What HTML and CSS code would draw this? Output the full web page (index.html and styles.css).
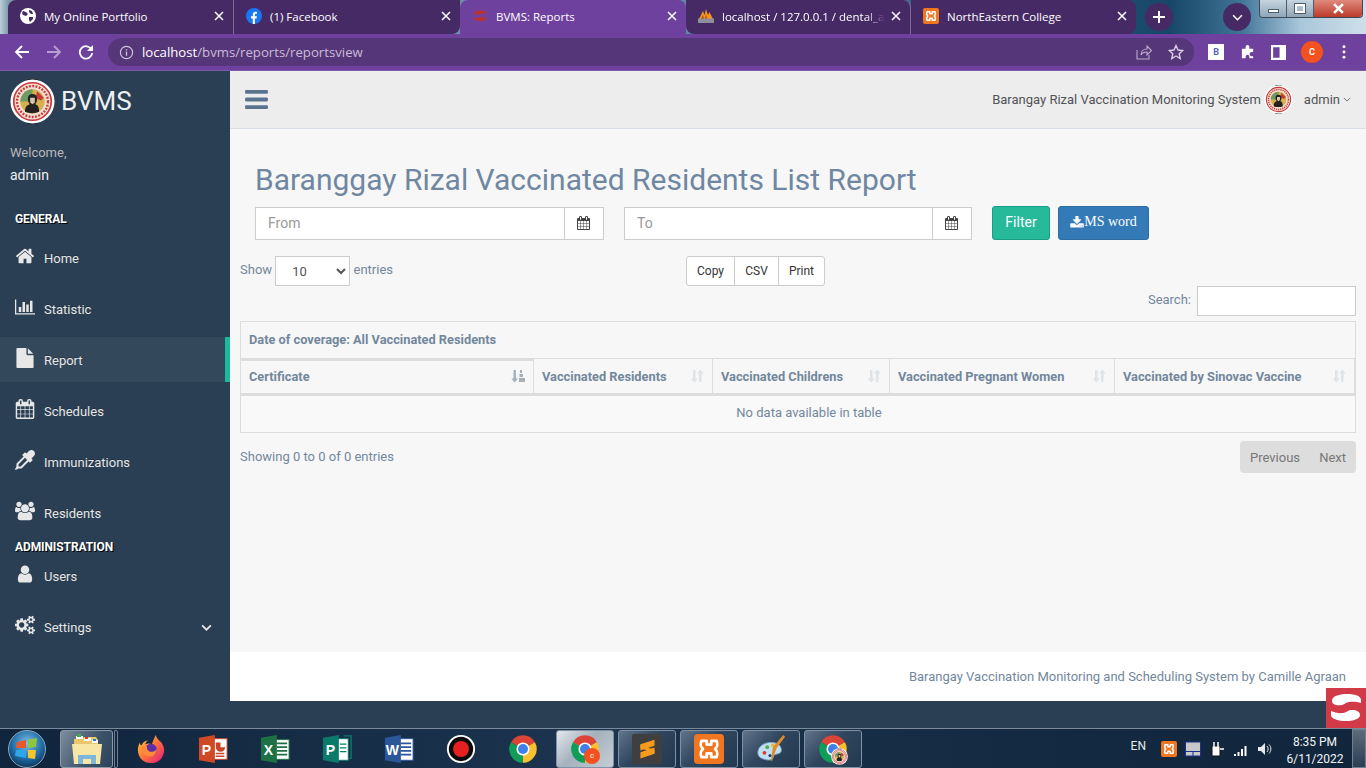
FILE: index.html
```html
<!DOCTYPE html>
<html lang="en">

<head>
    <meta charset="UTF-8">
    <meta name="viewport" content="width=device-width, initial-scale=1.0">
    <title>BVMS: Reports</title>
    <link rel="stylesheet" href="styles.css">
</head>

<body>

    <!-- shared icons -->
    <svg class="sprite" aria-hidden="true">
        <symbol id="i-bars" viewBox="128 256 1536 1280"><path d="M1664 1344v128q0 26-19 45t-45 19h-1408q-26 0-45-19t-19-45v-128q0-26 19-45t45-19h1408q26 0 45 19t19 45zm0-512v128q0 26-19 45t-45 19h-1408q-26 0-45-19t-19-45v-128q0-26 19-45t45-19h1408q26 0 45 19t19 45zm0-512v128q0 26-19 45t-45 19h-1408q-26 0-45-19t-19-45v-128q0-26 19-45t45-19h1408q26 0 45 19t19 45z"/></symbol>
        <symbol id="i-home" viewBox="0 0 1792 1792"><path d="M1472 992v480q0 26-19 45t-45 19h-384v-384h-256v384h-384q-26 0-45-19t-19-45v-480q0-1 .5-3t.5-3l575-474 575 474q1 2 1 6zm223-69l-62 74q-8 9-21 11h-3q-13 0-21-7l-692-577-692 577q-12 8-24 7-13-2-21-11l-62-74q-8-10-7-23.5t11-21.5l719-599q32-26 76-26t76 26l244 204v-195q0-14 9-23t23-9h192q14 0 23 9t9 23v408l219 182q10 8 11 21.5t-7 23.5z"/></symbol>
        <symbol id="i-chart" viewBox="0 0 2048 1792"><path d="M640 896v512h-256v-512h256zm384-512v1024h-256v-1024h256zm1024 1152v128h-2048v-1536h128v1408h1920zm-640-896v768h-256v-768h256zm384-384v1152h-256v-1152h256z"/></symbol>
        <symbol id="i-file" viewBox="128 0 1536 1792"><path d="M1152 512v-472q22 14 36 28l408 408q14 14 28 36h-472zm-128 32q0 40 28 68t68 28h544v1056q0 40-28 68t-68 28h-1344q-40 0-68-28t-28-68v-1600q0-40 28-68t68-28h800v544z"/></symbol>
        <symbol id="i-calendar" viewBox="0 0 1664 1792"><path d="M128 1664h288v-288h-288v288zm352 0h320v-288h-320v288zm-352-352h288v-320h-288v320zm352 0h320v-320h-320v320zm-352-384h288v-288h-288v288zm736 736h320v-288h-320v288zm-384-736h320v-288h-320v288zm768 736h288v-288h-288v288zm-384-352h320v-320h-320v320zm-352-864v-288q0-13-9.5-22.5t-22.5-9.5h-64q-13 0-22.5 9.5t-9.5 22.5v288q0 13 9.5 22.5t22.5 9.5h64q13 0 22.5-9.5t9.5-22.5zm736 864h288v-320h-288v320zm-384-384h320v-288h-320v288zm384 0h288v-288h-288v288zm32-480v-288q0-13-9.5-22.5t-22.5-9.5h-64q-13 0-22.5 9.5t-9.5 22.5v288q0 13 9.5 22.5t22.5 9.5h64q13 0 22.5-9.5t9.5-22.5zm384-64v1280q0 52-38 90t-90 38h-1408q-52 0-90-38t-38-90v-1280q0-52 38-90t90-38h128v-96q0-66 47-113t113-47h64q66 0 113 47t47 113v96h384v-96q0-66 47-113t113-47h64q66 0 113 47t47 113v96h128q52 0 90 38t38 90z"/></symbol>
        <symbol id="i-dropper" viewBox="0 0 1792 1792"><path d="M1698 94q94 94 94 226.5t-94 225.5l-225 223 104 104q10 10 10 23t-10 23l-210 210q-10 10-23 10t-23-10l-105-105-603 603q-37 37-90 37h-203l-256 128-64-64 128-256v-203q0-53 37-90l603-603-105-105q-10-10-10-23t10-23l210-210q10-10 23-10t23 10l104 104 223-225q93-94 225.5-94t226.5 94zm-1186 1378l576-576-192-192-576 576v192h192z"/></symbol>
        <symbol id="i-users" viewBox="0 0 1920 1792"><path d="M593 896q-162 5-265 128h-134q-82 0-138-40.5t-56-118.5q0-353 124-353 6 0 43.5 21t97.5 42.5 119 21.5q67 0 133-23-5 37-5 66 0 139 81 256zm1071 637q0 120-73 189.5t-194 69.5h-874q-121 0-194-69.5t-73-189.5q0-53 3.5-103.5t14-109 26.5-108.5 43-97.5 62-81 85.5-53.5 111.5-20q10 0 43 21.5t73 48 107 48 135 21.5 135-21.5 107-48 73-48 43-21.5q61 0 111.5 20t85.5 53.5 62 81 43 97.5 26.5 108.5 14 109 3.5 103.5zm-1024-1277q0 106-75 181t-181 75-181-75-75-181 75-181 181-75 181 75 75 181zm704 384q0 159-112.5 271.5t-271.5 112.5-271.5-112.5-112.5-271.5 112.5-271.5 271.5-112.5 271.5 112.5 112.5 271.5zm576 225q0 78-56 118.5t-138 40.5h-134q-103-123-265-128 81-117 81-256 0-29-5-66 66 23 133 23 59 0 119-21.5t97.5-42.5 43.5-21q124 0 124 353zm-128-609q0 106-75 181t-181 75-181-75-75-181 75-181 181-75 181 75 75 181z"/></symbol>
        <symbol id="i-user" viewBox="0 128 1792 1536"><path d="M1536 1399q0 109-62.5 187t-150.5 78h-854q-88 0-150.5-78t-62.5-187q0-85 8.5-160.5t31.5-152 58.5-131 94-89 134.5-34.5q131 128 313 128t313-128q76 0 134.5 34.5t94 89 58.5 131 31.5 152 8.5 160.5zm-256-887q0 159-112.5 271.5t-271.5 112.5-271.5-112.5-112.5-271.5 112.5-271.5 271.5-112.5 271.5 112.5 112.5 271.5z"/></symbol>
        <symbol id="i-cogs" viewBox="0 0 1920 1792"><path d="M896 896q0-106-75-181t-181-75-181 75-75 181 75 181 181 75 181-75 75-181zm768 512q0-52-38-90t-90-38-90 38-38 90q0 53 37.5 90.5t90.5 37.5 90.5-37.5 37.5-90.5zm0-1024q0-52-38-90t-90-38-90 38-38 90q0 53 37.5 90.5t90.5 37.5 90.5-37.5 37.5-90.5zm-384 421v185q0 10-7 19.5t-16 10.5l-155 24q-11 35-32 76 34 48 90 115 7 11 7 20 0 12-7 19-23 30-82.5 89.5t-78.5 59.5q-11 0-21-7l-115-90q-37 19-77 31-11 108-23 155-7 24-30 24h-186q-11 0-20-7.5t-10-17.5l-23-153q-34-10-75-31l-118 89q-7 7-20 7-11 0-21-8-144-133-144-160 0-9 7-19 10-14 41-53t47-61q-23-44-35-82l-152-24q-10-1-17-9.5t-7-19.5v-185q0-10 7-19.5t16-10.5l155-24q11-35 32-76-34-48-90-115-7-11-7-20 0-12 7-20 22-30 82-89t79-59q11 0 21 7l115 90q34-18 77-32 11-108 23-154 7-24 30-24h186q11 0 20 7.5t10 17.5l23 153q34 10 75 31l118-89q8-7 20-7 11 0 21 8 144 133 144 160 0 8-7 19-12 16-42 54t-45 60q23 48 34 82l152 23q10 2 17 10.5t7 19.5zm640 533v140q0 16-149 31-12 27-30 52 51 113 51 138 0 4-4 7-122 71-124 71-8 0-46-47t-52-68q-20 2-30 2t-30-2q-14 21-52 68t-46 47q-2 0-124-71-4-3-4-7 0-25 51-138-18-25-30-52-149-15-149-31v-140q0-16 149-31 13-29 30-52-51-113-51-138 0-4 4-7 4-2 35-20t59-34 30-16q8 0 46 46.5t52 67.5q20-2 30-2t30 2q51-71 92-112l6-2q4 0 124 70 4 3 4 7 0 25-51 138 17 23 30 52 149 15 149 31zm0-1024v140q0 16-149 31-12 27-30 52 51 113 51 138 0 4-4 7-122 71-124 71-8 0-46-47t-52-68q-20 2-30 2t-30-2q-14 21-52 68t-46 47q-2 0-124-71-4-3-4-7 0-25 51-138-18-25-30-52-149-15-149-31v-140q0-16 149-31 13-29 30-52-51-113-51-138 0-4 4-7 4-2 35-20t59-34 30-16q8 0 46 46.5t52 67.5q20-2 30-2t30 2q51-71 92-112l6-2q4 0 124 70 4 3 4 7 0 25-51 138 17 23 30 52 149 15 149 31z"/></symbol>
        <symbol id="i-download" viewBox="64 128 1664 1472"><path d="M1344 1344q0-26-19-45t-45-19-45 19-19 45 19 45 45 19 45-19 19-45zm256 0q0-26-19-45t-45-19-45 19-19 45 19 45 45 19 45-19 19-45zm128-224v320q0 40-28 68t-68 28h-1472q-40 0-68-28t-28-68v-320q0-40 28-68t68-28h465l135 136q58 56 136 56t136-56l136-136h464q40 0 68 28t28 68zm-325-569q17 41-14 70l-448 448q-18 19-45 19t-45-19l-448-448q-31-29-14-70 17-39 59-39h256v-448q0-26 19-45t45-19h256q26 0 45 19t19 45v448h256q42 0 59 39z"/></symbol>
        <symbol id="i-sort" viewBox="0 0 14 14"><path d="M3 1h2.600v8.500H8L4.300 13.600.6 9.500H3z"/><path d="M9 13h2.600V4.500H14L10.300 .4 6.600 4.500H9z"/></symbol>
        <symbol id="i-sort-asc" viewBox="0 0 14 14"><path d="M2.500 1h2.400v8.500h2.100L3.700 13.600.4 9.500h2.100z"/><path d="M9 1h2v3H9zM8.500 5h3.500v3H8.500zM8 9h6v4H8z"/></symbol>
        <symbol id="i-close" viewBox="0 0 10 10"><path d="M1 1l8 8M9 1L1 9" fill="none" stroke="currentColor" stroke-width="1.500"/></symbol>
        <symbol id="i-xampp" viewBox="0 0 24 24">
            <rect width="24" height="24" rx="3" fill="#f0761f"/>
            <path d="M6 5.500h4.200v3h3.600v-3H18c1.200 3 1 4.500-1.200 6.500 2.200 2 2.400 3.500 1.200 6.500h-4.200v-3h-3.600v3H6c-1.200-3-1-4.500 1.200-6.500C5 10 4.800 8.500 6 5.500z" fill="none" stroke="#fff" stroke-width="2.200" stroke-linejoin="round"/>
        </symbol>
        <symbol id="i-chrome" viewBox="0 0 48 48">
            <path d="M24 24L4.900 13A22 22 0 0 1 43.050 13z" fill="#db4437"/>
            <path d="M24 24L4.900 13A22 22 0 0 0 24 46z" fill="#0f9d58"/>
            <path d="M24 24L24 46A22 22 0 0 0 43.050 13z" fill="#fbc02d"/>
            <circle cx="24" cy="24" r="10.500" fill="#fff"/>
            <circle cx="24" cy="24" r="8" fill="#3f7fe8"/>
        </symbol>
        <symbol id="i-seal" viewBox="0 0 48 48">
            <rect x="18" y="0" width="12" height="48" rx="3" fill="#111"/>
            <circle cx="24" cy="24" r="23.500" fill="#fff"/>
            <circle cx="24" cy="24" r="20" fill="#f3dfd2" stroke="#c9383a" stroke-width="1.800"/>
            <circle cx="24" cy="24" r="16.500" fill="none" stroke="#c9383a" stroke-width="2.500" stroke-dasharray="2 1.500"/>
            <circle cx="24" cy="24" r="13" fill="#d5b04b"/>
            <path d="M11 24a13 13 0 0 1 13-13V24z" fill="#6f9a63"/>
            <path d="M29 13l7 7-3 3-6-3z" fill="#c9383a"/>
            <path d="M16 35c0-5 2-7 5-8-1-2-2-3-2-6 0-3 2-5 5-5s5 2 5 5c0 3-1 4-2 6 3 1 4 3 4 8-4 2-11 2-15 0z" fill="#222"/>
            <path d="M21.500 20h5v5l-2.500 2-2.500-2z" fill="#d9c4ae"/>
        </symbol>
        <symbol id="i-bvms" viewBox="0 0 40 40">
            <path d="M6 13c0-5 7-7 15-7s14 2 14 6v3c-3-1-8-1.500-12-1-3 .5-4 2-7 3-4 1-10 0-10-4z"/>
            <path d="M34 27c0 4-7 6-14 6S5 31 5 27v-4c3 1.500 8 2.500 12 2 3-.5 5-2.500 8-3 4-.5 9 1 9 5z"/>
        </symbol>
    </svg>

    <div class="tabstrip">
        <div class="tab tab-dark tab-first">
            <svg class="tab-icon" viewBox="0 0 16 16"><circle cx="8" cy="8" r="8" fill="#fff"/><path d="M3 3l3 1 2 2-2 2-3-1-1-2zM9 9l4 0 0 2-3 3-1-2z" fill="#462a66"/><path d="M9 2l3 1 1 3-2 0-2-2z" fill="#462a66"/></svg>
            <span class="tab-title">My Online Portfolio</span>
            <svg class="tab-close"><use href="#i-close"/></svg>
        </div>
        <div class="tab tab-dark tab-before-active">
            <svg class="tab-icon" viewBox="0 0 16 16"><circle cx="8" cy="8" r="8" fill="#1a77f2"/><path d="M6.800 16v-5.500H5V8.200h1.800V6.600c0-1.800 1.100-2.800 2.700-2.800l1.500.1v1.900h-1c-.9 0-1.100.5-1.100 1.100v1.300h2l-.3 2.300H8.900V16z" fill="#fff"/></svg>
            <span class="tab-title">(1) Facebook</span>
            <svg class="tab-close"><use href="#i-close"/></svg>
        </div>
        <div class="tab tab-active">
            <svg class="tab-icon tab-icon-red"><use href="#i-bvms"/></svg>
            <span class="tab-title">BVMS: Reports</span>
            <svg class="tab-close"><use href="#i-close"/></svg>
        </div>
        <div class="tab tab-dark tab-after-active">
            <svg class="tab-icon" viewBox="0 0 16 16"><path d="M1 11L5 3l1.500 4L8 1l2 6 1.500-3L15 11z" fill="#f0961f"/><path d="M7 11l1-5 1 5zM3 11l2-4 1 4z" fill="#b5491c"/><rect x="0" y="10.500" width="16" height="4.500" fill="#8d8f9b"/></svg>
            <span class="tab-title tab-title-fade">localhost / 127.0.0.1 / dental_a</span>
            <svg class="tab-close"><use href="#i-close"/></svg>
        </div>
        <div class="tab tab-dark tab-last">
            <svg class="tab-icon"><use href="#i-xampp"/></svg>
            <span class="tab-title">NorthEastern College</span>
            <svg class="tab-close"><use href="#i-close"/></svg>
        </div>
        <div class="round-btn round-plus"><svg viewBox="0 0 12 12"><path d="M6 0v12M0 6h12" fill="none" stroke="#fff" stroke-width="2"/></svg></div>
        <div class="round-btn round-down"><svg viewBox="0 0 12 8"><path d="M1 1.500l5 5 5-5" fill="none" stroke="#fff" stroke-width="1.800"/></svg></div>
        <div class="win-controls">
            <span class="win-btn"><i class="win-min"></i></span>
            <span class="win-btn"><i class="win-max"></i></span>
            <span class="win-btn win-close"><svg viewBox="0 0 10 10"><path d="M1 1l8 8M9 1L1 9" fill="none" stroke="#fff" stroke-width="2.400"/></svg></span>
        </div>
    </div>

    <div class="toolbar">
        <svg class="nav-btn" viewBox="0 0 16 16"><path d="M15 8H2M8 2L2 8l6 6" fill="none" stroke="#fff" stroke-width="1.800"/></svg>
        <svg class="nav-btn nav-dim" viewBox="0 0 16 16"><path d="M1 8h13M8 2l6 6-6 6" fill="none" stroke="#b79fd3" stroke-width="1.800"/></svg>
        <svg class="nav-btn" viewBox="0 0 16 16"><path d="M13.500 5.500A6.200 6.200 0 1 0 14.200 9" fill="none" stroke="#fff" stroke-width="1.800"/><path d="M15 1v6H9z" fill="#fff"/></svg>
        <div class="address">
            <svg class="addr-info" viewBox="0 0 16 16"><circle cx="8" cy="8" r="6.500" fill="none" stroke="#cfc4de" stroke-width="1.300"/><path d="M8 7v4.500M8 4.500v1.300" stroke="#cfc4de" stroke-width="1.400"/></svg>
            <span class="addr-url"><b>localhost</b>/bvms/reports/reportsview</span>
            <svg class="addr-icon" viewBox="0 0 16 16"><path d="M1 6v9h12v-4M5 11c0-4 3-6 6-6V2l4.500 4.500L11 11V8c-3 0-5 1-6 3z" fill="none" stroke="#bcadcf" stroke-width="1.100"/></svg>
            <svg class="addr-icon" viewBox="0 0 16 16"><path d="M8 1.500l2 4.500 4.800.5-3.600 3.200 1 4.800L8 12l-4.200 2.500 1-4.800L1.200 6.500 6 6z" fill="none" stroke="#d8cfe3" stroke-width="1.400"/></svg>
        </div>
        <div class="ext-icons">
            <span class="ext-b">B</span>
            <svg class="ext-icon" viewBox="0 0 16 16"><path d="M1 5h4V3a2 2 0 0 1 4 0v2h4v3.500h-1.500a2.200 2.200 0 0 0 0 4.500H13v2H9v-1.500a2 2 0 0 0-4 0V15H1z" fill="#fff" transform="translate(1 -1)"/></svg>
            <svg class="ext-icon" viewBox="0 0 14 14"><path d="M1 1h12v12H1z" fill="none" stroke="#fff" stroke-width="2"/><path d="M8 1h5v12H8z" fill="#fff"/></svg>
            <span class="avatar">C</span>
            <svg class="ext-dots" viewBox="0 0 4 16"><circle cx="2" cy="2" r="1.700"/><circle cx="2" cy="8" r="1.700"/><circle cx="2" cy="14" r="1.700"/></svg>
        </div>
    </div>

    <div class="app">
        <aside class="sidebar">
            <div class="brand">
                <svg class="brand-logo"><use href="#i-seal"/></svg>
                <span>BVMS</span>
            </div>
            <div class="profile">
                <span>Welcome,</span>
                <h2>admin</h2>
            </div>
            <h3 class="menu-title">General</h3>
            <ul class="menu">
                <li><svg class="menu-icon"><use href="#i-home"/></svg>Home</li>
                <li><svg class="menu-icon"><use href="#i-chart"/></svg>Statistic</li>
                <li class="active"><svg class="menu-icon"><use href="#i-file"/></svg>Report</li>
                <li><svg class="menu-icon"><use href="#i-calendar"/></svg>Schedules</li>
                <li><svg class="menu-icon"><use href="#i-dropper"/></svg>Immunizations</li>
                <li><svg class="menu-icon"><use href="#i-users"/></svg>Residents</li>
            </ul>
            <h3 class="menu-title menu-title-admin">Administration</h3>
            <ul class="menu">
                <li><svg class="menu-icon"><use href="#i-user"/></svg>Users</li>
                <li><svg class="menu-icon"><use href="#i-cogs"/></svg>Settings
                    <svg class="menu-chevron" viewBox="0 0 12 8"><path d="M1 1.500l5 5 5-5" fill="none" stroke="#e7e7e7" stroke-width="2"/></svg>
                </li>
            </ul>
        </aside>

        <div class="main">
            <nav class="topnav">
                <svg class="hamburger"><use href="#i-bars"/></svg>
                <div class="topnav-right">
                    <span>Barangay Rizal Vaccination Monitoring System</span>
                    <svg class="top-logo"><use href="#i-seal"/></svg>
                    <span class="top-user">admin</span>
                    <svg class="top-chevron" viewBox="0 0 10 6"><path d="M1 1l4 4 4-4" fill="none" stroke="#515356" stroke-width="1"/></svg>
                </div>
            </nav>

            <main class="content">
                <h1 class="page-title">Baranggay Rizal Vaccinated Residents List Report</h1>

                <div class="filter-row">
                    <div class="date-group">
                        <input type="text" placeholder="From">
                        <span class="date-addon"><svg><use href="#i-calendar"/></svg></span>
                    </div>
                    <div class="date-group date-group-to">
                        <input type="text" placeholder="To">
                        <span class="date-addon"><svg><use href="#i-calendar"/></svg></span>
                    </div>
                    <button class="btn btn-filter">Filter</button>
                    <button class="btn btn-word"><svg><use href="#i-download"/></svg>MS word</button>
                </div>

                <div class="dt-top">
                    <label class="dt-length">Show
                        <select><option>10</option></select>
                        entries</label>
                    <div class="dt-buttons">
                        <span>Copy</span><span>CSV</span><span>Print</span>
                    </div>
                </div>
                <div class="dt-search">
                    <label for="search">Search:</label>
                    <input type="text" id="search">
                </div>

                <table class="dt-table">
                    <colgroup>
                        <col class="col-1"><col class="col-2"><col class="col-3"><col class="col-4"><col class="col-5">
                    </colgroup>
                    <thead>
                        <tr>
                            <td colspan="5" class="dt-caption">Date of coverage: All Vaccinated Residents</td>
                        </tr>
                        <tr class="dt-head">
                            <th class="sorted">Certificate<svg class="sort-icon"><use href="#i-sort-asc"/></svg></th>
                            <th>Vaccinated Residents<svg class="sort-icon"><use href="#i-sort"/></svg></th>
                            <th>Vaccinated Childrens<svg class="sort-icon"><use href="#i-sort"/></svg></th>
                            <th>Vaccinated Pregnant Women<svg class="sort-icon"><use href="#i-sort"/></svg></th>
                            <th>Vaccinated by Sinovac Vaccine<svg class="sort-icon"><use href="#i-sort"/></svg></th>
                        </tr>
                    </thead>
                    <tbody>
                        <tr>
                            <td colspan="5" class="dt-empty">No data available in table</td>
                        </tr>
                    </tbody>
                </table>

                <div class="dt-bottom">
                    <span class="dt-info">Showing 0 to 0 of 0 entries</span>
                    <div class="dt-paging"><span>Previous</span><span>Next</span></div>
                </div>
            </main>

            <footer class="footer">Barangay Vaccination Monitoring and Scheduling System by Camille Agraan</footer>
        </div>
    </div>

    <!-- recorder watermark -->
    <div class="corner-logo"><svg><use href="#i-bvms"/></svg></div>

    <div class="taskbar">
        <div class="start-orb">
            <svg viewBox="0 0 38 38">
                <defs>
                    <radialGradient id="orb" cx="50%" cy="35%" r="70%"><stop offset="0" stop-color="#7fc0e8"/><stop offset=".6" stop-color="#1d6aa5"/><stop offset="1" stop-color="#0c2c4c"/></radialGradient>
                </defs>
                <circle cx="19" cy="19" r="18.500" fill="url(#orb)" stroke="#8fa6b8"/>
                <path d="M9 12l9-2v8H8z" fill="#e8582a"/>
                <path d="M20 9.500l9 -1.500-1 9-8 1z" fill="#8dc63f"/>
                <path d="M8 20h10v8l-11-2z" fill="#2fa4e7"/>
                <path d="M20 20h8l-1 9-7-1z" fill="#f6c52d"/>
            </svg>
        </div>
        <div class="task-btn task-explorer">
            <svg viewBox="0 0 34 32">
                <path d="M4 6h8l2-2h12l2 3v22H4z" fill="#e7c96b"/>
                <path d="M6 3h7v3H6z" fill="#fff"/><path d="M7 1h4v3H7z" fill="#3fae49"/>
                <path d="M14 5h7v3h-7z" fill="#fff"/><path d="M15 4h3v2h-3z" fill="#d7392d"/>
                <path d="M22 7h6v3h-6z" fill="#fff"/><path d="M23 6h3v2h-3z" fill="#2b7bd1"/>
                <path d="M2 11h30l-2 20H4z" fill="#f7e6a4"/>
                <path d="M8 31v-9h18v9h-5v-5h-8v5z" fill="#7fb6dc"/>
            </svg>
        </div>
        <div class="task-stub"></div>
        <div class="task-list">
            <div class="task-item">
                <svg viewBox="0 0 32 32">
                    <defs>
                        <linearGradient id="fx" x1="0" y1="0" x2="1" y2="1"><stop offset="0" stop-color="#ffd43a"/><stop offset=".5" stop-color="#ff7139"/><stop offset="1" stop-color="#e31587"/></linearGradient>
                    </defs>
                    <path d="M21 1c1 4 3 5 6 8 3 4 4 9 2 13-2 6-7 9-13 9C8 31 2 25 2 17c0-3 1-6 2-8 0 2 1 3 2 3 1-3 4-5 7-5-2 1-3 3-3 4 2-1 5-1 7 0 1-4 3-7 4-10z" fill="url(#fx)"/>
                    <circle cx="16" cy="17" r="6.500" fill="#5b2ea6"/>
                    <path d="M5 14c3-1 5 0 7-1-1 3 1 6 5 6 3 0 5-2 5-4 1 4-2 9-7 9-6 0-10-5-10-10z" fill="#ff8a3c"/>
                </svg>
            </div>
            <div class="task-item">
                <svg viewBox="0 0 32 32"><rect x="14" y="5" width="17" height="22" fill="#fff" stroke="#c8452a"/><path d="M19 9h5v5h5a5 5 0 1 1-10 0z" fill="#c8452a"/><path d="M19 20h9v1.500h-9zM19 23h9v1.500h-9z" fill="#c8452a"/><path d="M1 4l17-3v30L1 28z" fill="#cf4a24"/><text x="9" y="22" class="office-letter">P</text></svg>
            </div>
            <div class="task-item">
                <svg viewBox="0 0 32 32"><rect x="15" y="6" width="16" height="21" fill="#fff" stroke="#1e7145"/><path d="M18 9h11v2h-11zM18 13h11v2h-11zM18 17h11v2h-11zM18 21h11v2h-11z" fill="#1e7145"/><path d="M1 4l17-3v30L1 28z" fill="#1e7145"/><text x="9" y="22" class="office-letter">X</text></svg>
            </div>
            <div class="task-item">
                <svg viewBox="0 0 32 32"><path d="M23 2h8v24h-3" fill="none" stroke="#0b7a6b" stroke-width="1.500"/><rect x="15" y="5" width="13" height="23" fill="#fff" stroke="#0b7a6b"/><path d="M19 10h7v1.500h-7zM19 14h7v1.500h-7zM19 18h7v1.500h-7z" fill="#0b7a6b"/><path d="M1 4l17-3v30L1 28z" fill="#0b7a6b"/><text x="9" y="22" class="office-letter">P</text></svg>
            </div>
            <div class="task-item">
                <svg viewBox="0 0 32 32"><rect x="15" y="5" width="16" height="23" fill="#fff" stroke="#2b579a"/><path d="M18 9h11v2h-11zM18 13h11v2h-11zM18 17h11v2h-11zM18 21h11v2h-11z" fill="#2b579a"/><path d="M1 4l17-3v30L1 28z" fill="#2b579a"/><text x="9" y="22" class="office-letter">W</text></svg>
            </div>
            <div class="task-item">
                <svg viewBox="0 0 32 32"><circle cx="16" cy="16" r="14" fill="#0a0a0a" stroke="#fff" stroke-width="2"/><circle cx="16" cy="16" r="8.500" fill="#e62020"/></svg>
            </div>
            <div class="task-item"><svg><use href="#i-chrome"/></svg></div>
            <div class="task-item task-open task-current">
                <svg><use href="#i-chrome"/></svg>
                <span class="task-badge">c</span>
            </div>
            <div class="task-item task-open">
                <svg viewBox="0 0 32 32"><rect width="32" height="32" rx="2" fill="#3f3f3f"/><path d="M24 6v6.500L9 17.500V11zM24 14.500V21L9 26v-6.500z" fill="#f89a1c"/><path d="M9 11.500l15 5.500v3.500L9 15z" fill="#f89a1c"/></svg>
            </div>
            <div class="task-item task-open"><svg><use href="#i-xampp"/></svg></div>
            <div class="task-item task-open">
                <svg viewBox="0 0 32 32"><path d="M2 20c0-7 7-11 14-11 6 0 11 3 11 8 0 4-4 4-7 5-2 1-1 3-3 5-2 1-5 1-8 0-4-1-7-3-7-7z" fill="#bfe0f2" stroke="#7aa9c6"/><circle cx="9" cy="20" r="2" fill="#d93a34"/><circle cx="12" cy="14" r="2" fill="#4caf50"/><circle cx="18" cy="12" r="2" fill="#f3b32a"/><circle cx="15" cy="23" r="1.800" fill="#244a79"/><path d="M29 1l2 2-9 12 -5 14 -1-1 2-14z" fill="#e08a2c"/></svg>
            </div>
            <div class="task-item task-open">
                <svg><use href="#i-chrome"/></svg>
                <svg class="task-seal"><use href="#i-seal"/></svg>
            </div>
        </div>
        <div class="tray">
            <span class="tray-lang">EN</span>
            <svg class="tray-icon"><use href="#i-xampp"/></svg>
            <svg class="tray-icon" viewBox="0 0 16 16"><rect x=".5" y="1" width="15" height="14" fill="#c9c9c9" stroke="#1c2f8c"/><path d="M1 10.500h14M8 10.500V15" stroke="#1c2f8c"/></svg>
            <svg class="tray-icon" viewBox="0 0 16 16"><path d="M3 5h8v10H3z" fill="#fff" stroke="#111"/><path d="M5 1v5M9 1v5M11 8h4" stroke="#fff" stroke-width="1.500"/></svg>
            <svg class="tray-icon" viewBox="0 0 16 16"><path d="M1 13h2v2H1zM4.500 11h2v4h-2zM8 8h2v7H8zM11.500 5h2v10h-2z" fill="#fff"/></svg>
            <svg class="tray-icon" viewBox="0 0 16 16"><path d="M1 6h3l4-4v12l-4-4H1z" fill="#e8e8e8"/><path d="M10 5c1.500 1.500 1.500 4.500 0 6M12 3.500c2.500 2.500 2.500 6.500 0 9" fill="none" stroke="#e8e8e8"/></svg>
            <div class="tray-clock"><span>8:35 PM</span><span>6/11/2022</span></div>
            <div class="show-desktop"></div>
        </div>
    </div>

</body>

</html>
```

FILE: styles.css
```css
* {
    box-sizing: border-box;
}

body {
    margin: 0;
    width: 1366px;
    height: 768px;
    overflow: hidden;
    display: flex;
    flex-direction: column;
    position: relative;
    background-color: #2a3f54;
    font-family: Roboto, "Liberation Sans", sans-serif;
    font-size: 13px;
    color: #73879c;
}

.sprite {
    display: none;
}

/* browser tabs */
.tabstrip {
    height: 34px;
    flex: none;
    display: flex;
    padding-left: 8px;
    background: linear-gradient(90deg, #c0ced8 0, #7f9cb0 8px, #5f8aa3 700px, #2a5d80 1000px, #174668 1170px, #3f7396 1240px, #a9c6da 1300px, #cfdfea 1366px);
}

.tab {
    width: 225px;
    height: 34px;
    flex: none;
    display: flex;
    align-items: center;
    padding: 0 9px 2px 12px;
    font-family: "Open Sans", sans-serif;
    font-size: 11.5px;
    color: #fff;
}

.tab-dark {
    background-color: #462a66;
}

.tab-first {
    border-radius: 8px 0 0 0;
    border-right: 1px solid #7d6a95;
    width: 226px;
}

.tab-before-active {
    width: 226px;
    border-radius: 0 0 8px 0;
}

.tab-active {
    width: 226px;
    background-color: #6e419e;
    border-radius: 8px 8px 0 0;
}

.tab-after-active {
    border-radius: 0 8px 0 8px;
    border-right: 1px solid #7d6a95;
}

.tab-last {
    border-radius: 0 8px 8px 0;
}

.tab-icon {
    width: 16px;
    height: 16px;
    flex: none;
    margin-right: 8px;
}

.tab-icon-red {
    fill: #b8322f;
}

.tab-title {
    flex: 1;
    min-width: 0;
    white-space: nowrap;
    overflow: hidden;
}

.tab-title-fade {
    -webkit-mask-image: linear-gradient(90deg, #000 88%, transparent);
    mask-image: linear-gradient(90deg, #000 88%, transparent);
}

.tab-close {
    width: 10px;
    height: 10px;
    flex: none;
    margin-left: 6px;
    color: #fff;
}

.round-btn {
    width: 28px;
    height: 28px;
    flex: none;
    border-radius: 50%;
    background-color: #462a66;
    display: flex;
    align-items: center;
    justify-content: center;
    margin-top: 3px;
}

.round-plus {
    margin-left: 9px;
}

.round-plus svg {
    width: 12px;
    height: 12px;
}

.round-down {
    margin-left: 50px;
}

.round-down svg {
    width: 11px;
    height: 7px;
}

.win-controls {
    display: flex;
    height: 18px;
    margin-left: 8px;
    border: 1px solid #3c4a56;
    border-top: 0;
    border-radius: 0 0 4px 4px;
    overflow: hidden;
}

.win-btn {
    width: 27px;
    display: flex;
    align-items: center;
    justify-content: center;
    background: linear-gradient(#c6d5e0, #8fa6b7);
    border-right: 1px solid #4d5c69;
}

.win-min {
    width: 11px;
    height: 4px;
    background-color: #fff;
    border: 1px solid #4d5c69;
    margin-top: 5px;
}

.win-max {
    width: 10px;
    height: 9px;
    border: 2px solid #fff;
    outline: 1px solid #4d5c69;
}

.win-close {
    width: 48px;
    border-right: 0;
    background: linear-gradient(#e08a7c, #bb3a2b);
}

.win-close svg {
    width: 11px;
    height: 11px;
}

/* browser toolbar */
.toolbar {
    height: 37px;
    flex: none;
    display: flex;
    align-items: flex-start;
    padding: 4px 0 0 14px;
    background-color: #6e419e;
    border-bottom: 1px solid #7f5bab;
}

.nav-btn {
    width: 16px;
    height: 16px;
    flex: none;
    margin: 6px 16px 0 0;
}

.address {
    width: 1086px;
    height: 28px;
    margin-left: -2px;
    border-radius: 14px;
    background-color: #553678;
    display: flex;
    align-items: center;
    padding: 0 10px 0 11px;
}

.addr-info {
    width: 15px;
    height: 15px;
    flex: none;
    margin-right: 8px;
}

.addr-url {
    flex: 1;
    font-family: "Open Sans", sans-serif;
    font-size: 13.2px;
    color: #c9bcd9;
}

.addr-url b {
    font-weight: 400;
    color: #fff;
}

.addr-icon {
    width: 16px;
    height: 16px;
    margin-left: 16px;
    flex: none;
}

.ext-icons {
    display: flex;
    align-items: center;
    height: 28px;
    margin-left: 14px;
}

.ext-b {
    width: 16px;
    height: 16px;
    background-color: #fff;
    color: #5a62c8;
    font-size: 9px;
    font-weight: 700;
    text-align: center;
    line-height: 16px;
}

.ext-icon {
    width: 15px;
    height: 15px;
    margin-left: 16px;
    fill: #fff;
}

.avatar {
    width: 22px;
    height: 22px;
    margin-left: 15px;
    border-radius: 50%;
    background-color: #f4511e;
    color: #fff;
    font-size: 9px;
    font-weight: 700;
    text-align: center;
    line-height: 22px;
}

.ext-dots {
    width: 4px;
    height: 14px;
    margin-left: 19px;
    fill: #fff;
}

/* app layout */
.app {
    height: 657px;
    flex: none;
    display: grid;
    grid-template-columns: 230px 1fr;
    align-items: start;
}

.sidebar {
    color: #e7e7e7;
}

.brand {
    display: flex;
    align-items: center;
    height: 60px;
    padding: 0 0 0 10px;
    font-size: 26px;
    color: #ecf0f1;
}

.brand-logo {
    width: 45px;
    height: 45px;
    margin-right: 6px;
}

.profile {
    padding: 14px 10px 0;
}

.profile span {
    display: block;
    font-size: 13px;
    line-height: 16px;
    color: #bab8b8;
}

.profile h2 {
    margin: 6px 0 0;
    font-size: 14px;
    line-height: 16px;
    font-weight: 400;
    color: #ecf0f1;
}

.menu-title {
    margin: 29px 0 9px;
    padding-left: 15px;
    font-size: 12px;
    line-height: 14px;
    font-weight: 700;
    letter-spacing: -.1px;
    text-transform: uppercase;
    color: #fff;
    text-shadow: 1px 1px #000;
}

.menu-title-admin {
    margin: -1px 0 -1px;
}

.menu {
    list-style: none;
    margin: 0;
    padding: 0;
}

.menu li {
    height: 45px;
    margin-bottom: 6px;
    padding: 2px 0 0 15px;
    display: flex;
    align-items: center;
    color: #e7e7e7;
    font-size: 13px;
    text-shadow: rgba(0, 0, 0, .25) 0 -1px 0;
}

.menu li.active {
    background-color: rgba(255, 255, 255, .05);
    border-right: 5px solid #1abb9c;
}

.menu-icon {
    width: 20px;
    height: 20px;
    flex: none;
    margin: -5px 9px 0 0;
    fill: #e7e7e7;
}

.menu-chevron {
    width: 11px;
    height: 7px;
    margin-left: auto;
    margin-right: 18px;
}

.main {
    background-color: #f7f7f7;
}

.topnav {
    height: 58px;
    display: flex;
    align-items: center;
    justify-content: space-between;
    padding: 0 15px 1px 15px;
    background-color: #ededed;
    border-bottom: 1px solid #d9dee4;
}

.hamburger {
    width: 23px;
    height: 19px;
    fill: #5a738e;
}

.topnav-right {
    display: flex;
    align-items: center;
    color: #515356;
    font-size: 13px;
}

.top-logo {
    width: 29px;
    height: 29px;
    margin: 0 11px 0 3px;
}

.top-chevron {
    width: 8px;
    height: 5px;
    margin-left: 3px;
}

/* report content */
.content {
    height: 523px;
    padding: 33px 10px 0;
}

.page-title {
    margin: 0 0 8px 15px;
    font-size: 30px;
    line-height: 36px;
    font-weight: 400;
    color: #6f87a1;
}

.filter-row {
    display: flex;
    align-items: center;
    height: 34px;
    padding-left: 15px;
}

.date-group {
    width: 349px;
    height: 33px;
    display: flex;
    border: 1px solid #ccc;
    background-color: #fff;
}

.date-group-to {
    width: 348px;
    margin-left: 20px;
}

.date-group input {
    flex: 1;
    min-width: 0;
    border: 0;
    padding: 0 12px;
    font-family: inherit;
    font-size: 14px;
    background: transparent;
}

.date-group input::placeholder {
    color: #999;
    opacity: 1;
}

.date-addon {
    width: 39px;
    padding-right: 2px;
    border-left: 1px solid #ccc;
    display: flex;
    align-items: center;
    justify-content: center;
}

.date-addon svg {
    width: 13px;
    height: 14px;
    fill: #444;
}

.btn {
    height: 34px;
    border-radius: 3px;
    color: #fff;
    font-size: 14px;
    padding: 0 0 2px;
    display: flex;
    align-items: center;
    justify-content: center;
}

.btn-filter {
    width: 58px;
    margin-left: 20px;
    font-family: inherit;
    background-color: #26b99a;
    border: 1px solid #169f85;
}

.btn-word {
    width: 91px;
    margin-left: 8px;
    font-family: "Liberation Serif", serif;
    background-color: #337ab7;
    border: 1px solid #2e6da4;
}

.btn-word svg {
    width: 14px;
    height: 12px;
    fill: #fff;
}

.dt-top {
    display: flex;
    height: 30px;
    margin-top: 16px;
}

.dt-length {
    width: 446px;
    line-height: 27px;
}

.dt-length select {
    width: 75px;
    height: 30px;
    margin: 0 0;
    padding-left: 12px;
    border: 1px solid #ccc;
    background-color: #fff;
    color: #555;
    font-family: inherit;
    font-size: 13px;
    vertical-align: top;
}

.dt-buttons {
    display: flex;
    height: 30px;
    border: 1px solid #ccc;
    border-radius: 3px;
    background-color: #fff;
    color: #333;
    font-size: 12px;
}

.dt-buttons span {
    display: flex;
    align-items: center;
    justify-content: center;
    width: 47px;
    border-left: 1px solid #ccc;
}

.dt-buttons span:first-child {
    border-left: 0;
}

.dt-buttons span:nth-child(2) {
    width: 44px;
}

.dt-buttons span:last-child {
    width: 46px;
}

.dt-search {
    display: flex;
    justify-content: flex-end;
    align-items: center;
    height: 30px;
}

.dt-search label {
    margin-top: -4px;
}

.dt-search input {
    width: 159px;
    height: 30px;
    margin-left: 6px;
    border: 1px solid #ccc;
    background-color: #fff;
}

.dt-table {
    width: 1116px;
    margin-top: 5px;
    table-layout: fixed;
    border-collapse: separate;
    border-spacing: 0;
    border: 1px solid #ddd;
    font-size: 13px;
}

.col-1 {
    width: 293px;
}

.col-2 {
    width: 179px;
}

.col-3 {
    width: 177px;
}

.col-4 {
    width: 225px;
}

.dt-caption {
    height: 36px;
    padding: 0 8px 2px;
    font-weight: 700;
    font-size: 12.8px;
}

.dt-head th {
    height: 38px;
    padding: 0 8px;
    text-align: left;
    font-size: 12.8px;
    font-weight: 700;
    border-top: 1px solid #ddd;
    border-bottom: 3px solid #ddd;
    border-right: 1px solid #ddd;
    white-space: nowrap;
}

.dt-head th.sorted {
    border-top-width: 3px;
    padding-bottom: 2px;
}

.sort-icon {
    width: 14px;
    height: 14px;
    float: right;
    fill: #dfe4ea;
}

.sorted .sort-icon {
    fill: #a4afba;
}

.dt-empty {
    height: 36px;
    padding: 0 0 3px 22px;
    text-align: center;
    background-color: #f9f9f9;
}

.dt-bottom {
    display: flex;
    justify-content: space-between;
    align-items: flex-start;
    margin-top: 8px;
}

.dt-info {
    line-height: 32px;
}

.dt-paging {
    width: 116px;
    height: 32px;
    display: flex;
    align-items: center;
    justify-content: space-between;
    padding: 0 10px;
    border-radius: 4px;
    background-color: #ddd;
    color: #777;
}

.footer {
    height: 49px;
    padding: 17px 20px 0 0;
    background-color: #fff;
    text-align: right;
    font-size: 13px;
    line-height: 16px;
}

.corner-logo {
    position: absolute;
    left: 1326px;
    top: 688px;
    width: 40px;
    height: 40px;
    background-color: #d33a48;
}

.corner-logo svg {
    width: 40px;
    height: 40px;
    fill: #fff;
}

/* windows taskbar */
.taskbar {
    height: 40px;
    flex: none;
    display: flex;
    align-items: stretch;
    padding-left: 8px;
    background: linear-gradient(90deg, #10253c, #1c344f 600px, #142a42 1000px, #11263c);
    border-top: 1px solid #7b8b9b;
}

.start-orb {
    width: 38px;
    flex: none;
    padding-top: 1px;
}

.start-orb svg {
    width: 38px;
    height: 38px;
}

.task-btn {
    display: flex;
    align-items: center;
    justify-content: center;
}

.task-explorer {
    width: 53px;
    margin: 1px 0 0 14px;
    border: 1px solid #8b9aa8;
    border-radius: 3px;
    background: linear-gradient(120deg, #7c8d9e, #3c5268 60%, #2c435b);
}

.task-explorer svg {
    width: 34px;
    height: 32px;
}

.task-stub {
    width: 4px;
    margin: 1px 0 0 1px;
    border: 1px solid #6f8092;
    border-radius: 0 2px 2px 0;
}

.task-list {
    display: flex;
    gap: 4px;
    margin-left: 4px;
}

.task-item {
    width: 58px;
    position: relative;
    display: flex;
    align-items: center;
    justify-content: center;
}

.task-item > svg:first-child {
    width: 30px;
    height: 30px;
}

.task-open {
    margin-top: 1px;
    border: 1px solid #7f92a5;
    border-radius: 3px;
    background: linear-gradient(135deg, #61748a, #2f465e 45%, #23394f);
}

.task-current {
    background: linear-gradient(135deg, #e3e8ec, #a4b1bd 45%, #c6ced5);
}

.office-letter {
    font-family: "Liberation Sans", sans-serif;
    font-size: 15px;
    font-weight: 700;
    fill: #fff;
    text-anchor: middle;
}

.task-badge {
    position: absolute;
    right: 13px;
    bottom: 3px;
    width: 16px;
    height: 16px;
    border-radius: 50%;
    background-color: #f4511e;
    color: #fff;
    font-size: 8px;
    text-align: center;
    line-height: 15px;
}

.task-seal {
    position: absolute;
    right: 13px;
    bottom: 2px;
    width: 17px;
    height: 17px;
}

.tray {
    margin-left: auto;
    display: flex;
    align-items: center;
    color: #fff;
}

.tray-lang {
    font-size: 12px;
    margin: -6px 15px 0 0;
    color: #e6e9ed;
}

.tray-icon {
    width: 16px;
    height: 16px;
    margin-right: 8px;
}

.tray-clock {
    width: 68px;
    display: flex;
    flex-direction: column;
    align-items: center;
    padding-top: 5px;
    font-size: 12px;
    line-height: 17px;
    color: #f2f4f6;
}

.show-desktop {
    width: 14px;
    align-self: stretch;
    margin-left: 3px;
    border: 1px solid #72808e;
    background: linear-gradient(#5b6c7c, #2b3f53);
}
```
